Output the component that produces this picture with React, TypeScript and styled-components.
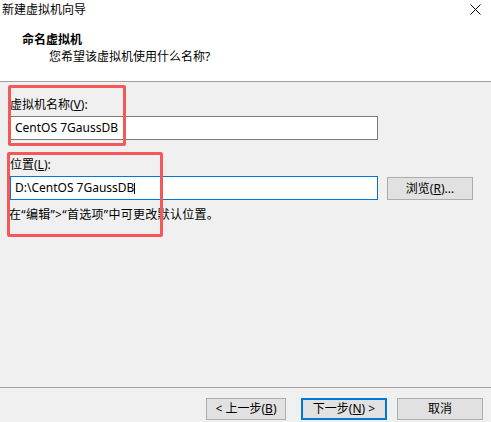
import React from "react";
import styled, { createGlobalStyle } from "styled-components";

const Global = createGlobalStyle`
  html, body { margin: 0; padding: 0; background: #f0f0f0; }
  body { font-family: "Noto Sans", "Noto Sans CJK SC", sans-serif; font-size: 12px; color: #000; }
`;

const Window = styled.div`
  position: relative;
  width: 491px;
  height: 422px;
  display: flex;
  flex-direction: column;
  background: #f0f0f0;
  overflow: hidden;
`;

const TitleBar = styled.div`
  height: 19px;
  background: #fff;
  display: flex;
  align-items: center;
  justify-content: space-between;
  padding: 0 10px 0 2px;
`;

const TitleText = styled.span`
  line-height: 19px;
  font-size: 12px;
`;

const Header = styled.div`
  background: #fff;
  padding: 13px 0 16px 22px;
  border-bottom: 1px solid #a0a0a0;
  display: flex;
  flex-direction: column;
  gap: 1px;
`;

const HeaderTitle = styled.div`
  font-weight: bold;
  line-height: 16px;
`;

const HeaderSub = styled.div`
  line-height: 16px;
  padding-left: 27px;
`;

const Body = styled.div`
  flex: 1;
  padding: 15px 0 0 10px;
  display: flex;
  flex-direction: column;
`;

const Label = styled.div<{ $mt?: number }>`
  line-height: 16px;
  margin-top: ${(p) => p.$mt ?? 0}px;
  margin-bottom: 3px;
`;

const U = styled.span`
  text-decoration: underline;
  text-underline-offset: 1px;
`;

const Row = styled.div`
  display: flex;
  align-items: flex-start;
  gap: 9px;
`;

const TextBox = styled.div<{ $focused?: boolean }>`
  box-sizing: border-box;
  width: 368px;
  height: 24px;
  background: #fff;
  border: 1px solid ${(p) => (p.$focused ? "#0078d7" : "#7a7a7a")};
  padding: 0 4px;
  display: flex;
  align-items: center;
  line-height: 16px;
  white-space: pre;
`;

const Caret = styled.span`
  display: inline-block;
  width: 1px;
  height: 11px;
  background: #000;
`;

const Button = styled.button<{ $w: number; $default?: boolean }>`
  box-sizing: border-box;
  width: ${(p) => p.$w}px;
  height: 22px;
  background: #e1e1e1;
  border: ${(p) => (p.$default ? "2px solid #0078d7" : "1px solid #adadad")};
  font-family: "Noto Sans", "Noto Sans CJK SC", sans-serif;
  font-size: 12px;
  color: #000;
  padding: 0;
  line-height: 16px;
  display: flex;
  align-items: center;
  justify-content: center;
  white-space: pre;
`;

const BrowseButton = styled(Button)`
  height: 23px;
  margin-top: 1px;
`;

const Hint = styled.div`
  line-height: 16px;
  margin-top: 7px;
  margin-left: -1px;
  letter-spacing: 0.3px;
`;

const Footer = styled.div`
  border-top: 1px solid #a0a0a0;
  height: 35px;
  box-sizing: border-box;
  padding: 10px 8px 0 0;
  display: flex;
  justify-content: flex-end;
  align-items: flex-start;
`;

const FooterGroup = styled.div<{ $gap: number }>`
  display: flex;
  gap: ${(p) => p.$gap}px;
`;

const Annotation = styled.div<{ $x: number; $y: number; $w: number; $h: number }>`
  position: absolute;
  left: ${(p) => p.$x}px;
  top: ${(p) => p.$y}px;
  width: ${(p) => p.$w}px;
  height: ${(p) => p.$h}px;
  box-sizing: border-box;
  border: 3.5px solid #f55858;
  border-radius: 2px;
  pointer-events: none;
`;

const CloseIcon = () => (
  <svg width="11" height="11" viewBox="0 0 11 11">
    <path d="M0.5 0.5 L10.5 10.5 M10.5 0.5 L0.5 10.5" stroke="#000" strokeWidth="1" fill="none" />
  </svg>
);

export default function App() {
  return (
    <>
      <Global />
      <Window>
        <TitleBar>
          <TitleText>新建虚拟机向导</TitleText>
          <CloseIcon />
        </TitleBar>
        <Header>
          <HeaderTitle>命名虚拟机</HeaderTitle>
          <HeaderSub>您希望该虚拟机使用什么名称?</HeaderSub>
        </Header>
        <Body>
          <Label>
            虚拟机名称(<U>V</U>):
          </Label>
          <TextBox>CentOS 7GaussDB</TextBox>
          <Label $mt={17}>
            位置(<U>L</U>):
          </Label>
          <Row>
            <TextBox $focused>
              D:\CentOS 7GaussDB
              <Caret />
            </TextBox>
            <BrowseButton $w={86}>
              浏览(<U>R</U>)...
            </BrowseButton>
          </Row>
          <Hint>在“编辑”&gt;“首选项”中可更改默认位置。</Hint>
        </Body>
        <Footer>
          <FooterGroup $gap={15}>
            <Button $w={80}>
              &lt; 上一步(<U>B</U>)
            </Button>
            <FooterGroup $gap={10}>
              <Button $w={86} $default>
                下一步(<U>N</U>) &gt;
              </Button>
              <Button $w={86}>取消</Button>
            </FooterGroup>
          </FooterGroup>
        </Footer>
        <Annotation $x={8} $y={85} $w={118} $h={61} />
        <Annotation $x={7} $y={152} $w={156} $h={85} />
      </Window>
    </>
  );
}
